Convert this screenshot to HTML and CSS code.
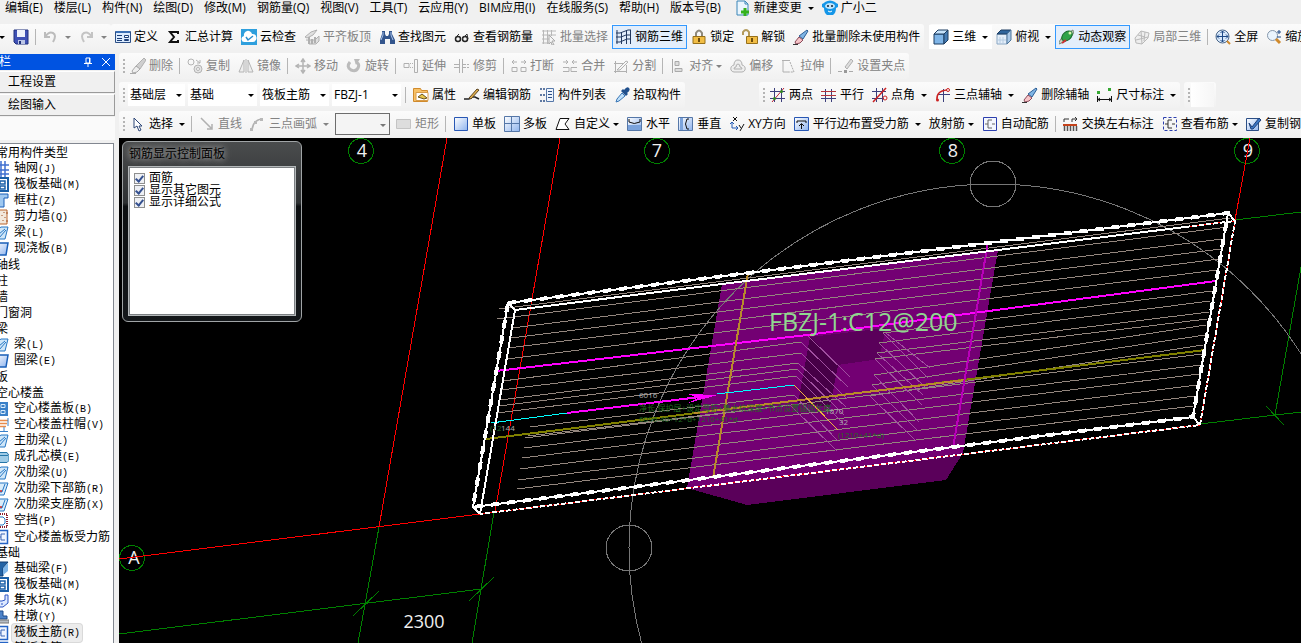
FILE: index.html
```
<!DOCTYPE html>
<html lang="zh-CN">

<head>
    <meta charset="UTF-8">
    <meta name="viewport" content="width=device-width, initial-scale=1.0">
    <title>钢筋三维</title>
    <link rel="stylesheet" href="styles.css">
</head>

<body>
    <!-- icon sprite -->
    <svg class="sprite" aria-hidden="true">
        <defs>
            <linearGradient id="blueFill" x1="0" y1="0" x2="1" y2="1">
                <stop offset="0" stop-color="#fff" />
                <stop offset="1" stop-color="#8fb4ee" />
            </linearGradient>
        </defs>
        <symbol id="newdoc" viewBox="0 0 16 16"><path d="M2 1h8l3 3v11H2z" fill="#eaf5fd" stroke="#3a86b8" /><path d="M10 1v3h3" fill="none" stroke="#3a86b8" /><path d="M8.500 8h3v2.500H14v3h-2.500V16h-3v-2.500H6v-3h2.500z" fill="#35b21c" /></symbol>
        <symbol id="robot" viewBox="0 0 16 16"><path d="M0 4l2-1 1-1q5-3 10 0l1 1 2 1v3l-2 1q0 5-3 7H5q-3-2-3-7L0 7z" fill="#1596e8" /><ellipse cx="8" cy="6" rx="5" ry="3" fill="#bfe4fb" /><circle cx="6" cy="6" r="1" fill="#123" /><circle cx="10" cy="6" r="1" fill="#123" /><path d="M6 11q2 2 4 0" stroke="#fff" fill="none" /></symbol>
        <symbol id="save" viewBox="0 0 16 16"><path d="M1 1h14v14H3l-2-2z" fill="#3f51b5" stroke="#20307c" /><path d="M4 1h8v7H4z" fill="#eef2fb" /><path d="M5 11h7v4H5z" fill="#bcc6e6" /><path d="M6 12h2v3H6z" fill="#20307c" /></symbol>
        <symbol id="undo" viewBox="0 0 16 16"><path d="M2 3v5h5M2 8q4-6 8-4t0 9" fill="none" stroke="#bcbcbc" stroke-width="2" /></symbol>
        <symbol id="redo" viewBox="0 0 16 16"><path d="M13 3v5H8M13 8Q9 2 5 4t0 9" fill="none" stroke="#c4c4c4" stroke-width="2" /></symbol>
        <symbol id="define" viewBox="0 0 16 16"><path d="M.5 2.500h15v11H.5z" fill="#dcecff" stroke="#2c4f86" /><path d="M1 2h14v2H1z" fill="#3b6fb4" /><path d="M2 6.500h5M2 9.500h5M2 11.500h5" stroke="#1d3f78" /><path d="M9.500 6.500h4v2h-4zM9.500 10.500h4v1h-4z" fill="#fff" stroke="#1d3f78" /></symbol>
        <symbol id="sigma" viewBox="0 0 16 16"><path d="M12 5V3H4l4 5-4 5h8v-2" fill="none" stroke="#111" stroke-width="2" /></symbol>
        <symbol id="cloud" viewBox="0 0 16 16"><path d="M0 0h16v16H0z" fill="#2e9fdd" /><path d="M4 13a3 3 0 0 1-1-6 4 4 0 0 1 8-2 4 4 0 0 1 1 8z" fill="#fff" /><path d="M5 8l2 3 5-4" fill="none" stroke="#2e8fcd" stroke-width="1.500" /></symbol>
        <symbol id="flush" viewBox="0 0 16 16"><path d="M1 8l6-5 6-2-4 5-6 3zM2 11h9l4-4v5l-3 3H5v-3" fill="#e0e0e0" stroke="#b0b0b0" /><path d="M5 8v7M8 10v5M11 8v6" stroke="#b0b0b0" stroke-width="2" /></symbol>
        <symbol id="binoculars" viewBox="0 0 16 16"><path d="M3 2h3v3l1 2h2l1-2V2h3v3l3 6v4h-5v-5H6v5H1v-4l2-6z" fill="#33558c" /><path d="M4 3v3l-2 5M12 3v3l2 5" fill="none" stroke="#a7c2ea" /></symbol>
        <symbol id="glasses" viewBox="0 0 16 16"><circle cx="4" cy="10" r="2.500" fill="none" stroke="#222" stroke-width="1.500" /><circle cx="11" cy="10" r="2.500" fill="none" stroke="#222" stroke-width="1.500" /><path d="M1 9l4-4M8 10l5-5 1 5" fill="none" stroke="#333" /></symbol>
        <symbol id="batchsel" viewBox="0 0 16 16"><path d="M1 2h14M1 6h14M1 10h8M1 14h8M2.500 1v14M6.500 1v14M10.500 1v6" stroke="#b8b8b8" /><path d="M8 6l6 6-3 0 2 4-2 0-1-3-2 2z" fill="#f4f4f4" stroke="#aaa" /></symbol>
        <symbol id="rebar3d" viewBox="0 0 16 16"><path d="M1 1v14M5.500 3v12M10.500 1v14M14.500 1v14M0 4h4l8-3h3M0 8h5l5-2h5M0 13h4l7-3h4" fill="none" stroke="#23395f" /></symbol>
        <symbol id="lock" viewBox="0 0 16 16"><path d="M5 8V4q3-5 6 0v4" fill="none" stroke="#8f8a7c" stroke-width="2" /><path d="M2 7.500h12v7H2z" fill="#f1bd45" stroke="#97701a" /><path d="M8 9v4" stroke="#6e4d0c" stroke-width="2" /></symbol>
        <symbol id="unlock" viewBox="0 0 16 16"><path d="M1 6V3q3-4 6 0v5" fill="none" stroke="#b39a5c" stroke-width="2" /><path d="M4.500 7.500h11v7h-11z" fill="#f1bd45" stroke="#97701a" /><path d="M10 9v4" stroke="#6e4d0c" stroke-width="2" /></symbol>
        <symbol id="brush" viewBox="0 0 16 16"><path d="M14 1l1 1-5 8-4-3z" fill="#7fb4e4" stroke="#2d5f96" /><path d="M6 8l4 3-3 3-4 1-1-2z" fill="#f6c4c8" stroke="#8a4a5a" /><path d="M0 15.500h5" stroke="#333" /></symbol>
        <symbol id="cube" viewBox="0 0 16 16"><path d="M1 5h10v10H1z" fill="#7fb5e8" stroke="#1c3c60" /><path d="M1 5l4-4h10l-4 4z" fill="#c6e2fa" stroke="#1c3c60" /><path d="M11 5l4-4v10l-4 4z" fill="#467cb4" stroke="#1c3c60" /></symbol>
        <symbol id="cubetop" viewBox="0 0 16 16"><path d="M1 5h10v10H1z" fill="#e4eef9" stroke="#8aa7c4" /><path d="M1 5l4-4h10l-4 4z" fill="#2f659c" stroke="#1c3c60" /><path d="M11 5l4-4v10l-4 4z" fill="#a8c8e8" stroke="#4d7499" /><path d="M4 8v6M7 8v6M2 11h8" stroke="#b5cce2" /></symbol>
        <symbol id="orbit" viewBox="0 0 16 16"><path d="M0 13q3-6 7-8l7-4q2 3-2 7-5 5-12 7z" fill="#c8d5c4" stroke="#7b8a78" /><ellipse cx="8" cy="7" rx="6" ry="4" transform="rotate(-40 8 7)" fill="#2fa34a" stroke="#176b2b" /><path d="M3 14l4-3" stroke="#c33" stroke-width="2" /><circle cx="11" cy="4" r="1.500" fill="#d9f5b0" /></symbol>
        <symbol id="local3d" viewBox="0 0 16 16"><path d="M1 9l6-7 8 2-1 5-6 6-6-1zM4 6l7 2M7 2l1 13M11 3l-1 9M2 11l12-3" fill="#eee" stroke="#b9b9b9" /></symbol>
        <symbol id="fullscreen" viewBox="0 0 16 16"><circle cx="7.500" cy="7.500" r="6.500" fill="#d9e9fb" stroke="#4a6689" /><path d="M7.500 2v11M2 7.500h11M5.500 4l2-2 2 2M5.500 11l2 2 2-2M4 5.500l-2 2 2 2M11 5.500l2 2-2 2" fill="none" stroke="#1f4a86" /><path d="M12 12l3 3" stroke="#d08a2c" stroke-width="2" /></symbol>
        <symbol id="zoomicon" viewBox="0 0 16 16"><circle cx="6.500" cy="6.500" r="5" fill="#eaf4fd" stroke="#8597ab" /><path d="M10 10l4 4" stroke="#d08a2c" stroke-width="3" /><path d="M11 3h4M13 1v4M11 8h4" stroke="#1f4a86" /></symbol>
        <symbol id="brushgray" viewBox="0 0 16 16"><path d="M14 0l2 2-6 9-4-3z" fill="#cfcfcf" stroke="#b0b0b0" /><path d="M6 8l4 3-3 3-4 1-1-2z" fill="#eee" stroke="#a8a8a8" /><path d="M0 15.500h6" stroke="#aaa" /></symbol>
        <symbol id="copy" viewBox="0 0 16 16"><circle cx="4" cy="4" r="3" fill="none" stroke="#b4b4b4" /><circle cx="11" cy="11" r="4" fill="#e4e4e4" stroke="#b4b4b4" /><circle cx="11" cy="11" r="1.500" fill="#fff" stroke="#b4b4b4" /><path d="M9 2l4 3M13 2v3h-3" fill="none" stroke="#b4b4b4" /></symbol>
        <symbol id="mirror" viewBox="0 0 16 16"><path d="M6 2v12H1zM10 2v12h5z" fill="#eee" stroke="#b4b4b4" /><path d="M8 1v14" stroke="#b4b4b4" /></symbol>
        <symbol id="move" viewBox="0 0 16 16"><path d="M8 2v12M2 8h12M6 4l2-3 2 3M6 12l2 3 2-3M4 6L1 8l3 2M12 6l3 2-3 2" fill="none" stroke="#b4b4b4" stroke-width="1.500" /></symbol>
        <symbol id="rotate" viewBox="0 0 16 16"><path d="M4 4q-4 5 1 8 5 2 7-2t-2-6" fill="none" stroke="#bbb" stroke-width="3" /><path d="M8 1h6l-4 6z" fill="#bbb" /></symbol>
        <symbol id="extend" viewBox="0 0 16 16"><path d="M1 5.500h5v4H1zM11.500 1.500h3v13h-3z" fill="none" stroke="#b0b0b0" /><path d="M7 5.500h4M7 9.500h4" stroke="#b0b0b0" stroke-dasharray="1 1" /></symbol>
        <symbol id="trim" viewBox="0 0 16 16"><path d="M5.500 1v14M8.500 1v14M0 6.500h5M0 9.500h5M9 6.500h3M9 9.500h3M13 6.500h2M13 9.500h2" stroke="#b0b0b0" /></symbol>
        <symbol id="break" viewBox="0 0 16 16"><path d="M1 4h5M10 4h5M3 2L1 4l2 2M13 2l2 2-2 2M1 9.500h5v4H1zM10 9.500h5v4h-5z" fill="none" stroke="#b0b0b0" /></symbol>
        <symbol id="merge" viewBox="0 0 16 16"><path d="M1 4h5M10 4h5M4 2l2 2-2 2M12 2l-2 2 2 2M1 9.500h6v4H1M15 9.500H9v4h6" fill="none" stroke="#b0b0b0" /></symbol>
        <symbol id="split" viewBox="0 0 16 16"><path d="M1 5.500h10M1 13.500h13M2.500 3v12M13.500 7v8M4 12l9-9 2 1-8 8z" fill="none" stroke="#b0b0b0" /></symbol>
        <symbol id="align" viewBox="0 0 16 16"><path d="M2.500 1v14M5 3.500h4v4H5zM5 10.500h7v3H5z" fill="#ddd" stroke="#aaa" /></symbol>
        <symbol id="offset" viewBox="0 0 16 16"><path d="M1 12q-1-4 3-5 0-5 4-5t4 5q4 1 3 5-1 2-3 2H4q-2 0-3-2z" fill="#eee" stroke="#b0b0b0" /><path d="M4 11q0-2 2-2 0-3 2-3t2 3q2 0 2 2z" fill="none" stroke="#b0b0b0" /></symbol>
        <symbol id="stretch" viewBox="0 0 16 16"><path d="M1 2.500h8M2 2v12h5" fill="none" stroke="#b0b0b0" /><path d="M9 4l4 10H7" fill="none" stroke="#aaa" stroke-dasharray="2 1" /></symbol>
        <symbol id="grippoint" viewBox="0 0 16 16"><path d="M7 9l6-8 2 2-6 8z" fill="#ddd" stroke="#b0b0b0" /><path d="M0 13.500h4M11 13.500h4" stroke="#aaa" /><path d="M6 12h3v3H6z" fill="#999" /></symbol>
        <symbol id="props" viewBox="0 0 16 16"><path d="M.5 1.500h7l1 2h6v11H.5z" fill="#f7c167" stroke="#d08a2c" /><path d="M3 5.500h12v8H3z" fill="#fff" stroke="#d89c4a" /><path d="M5 10l4-3 5 4-3 1z" fill="#e8c64b" stroke="#6b5320" /></symbol>
        <symbol id="editbar" viewBox="0 0 16 16"><path d="M0 12h5l2-2h4l4 2" fill="none" stroke="#222" stroke-width="1.500" /><path d="M5 11l8-9 2 1-8 9z" fill="#e2b04b" stroke="#5a4320" /></symbol>
        <symbol id="list" viewBox="0 0 16 16"><path d="M1 2h2M1 8h2M1 14h2M4 2h2M4 8h2M4 14h2" stroke="#2c4f86" stroke-width="1.500" /><path d="M7.500 1.500h7v13h-7z" fill="#eef4fc" stroke="#5577a8" /><path d="M9 4.500h4M9 7.500h4M9 10.500h4" stroke="#2c4f86" /></symbol>
        <symbol id="dropper" viewBox="0 0 16 16"><path d="M10 3q3-4 5-2t-2 5l1 1-2 2-5-5 2-2z" fill="#1f4f8c" /><path d="M8 6l3 3-6 5-3 1 1-3z" fill="#bfe0fa" stroke="#3a76b5" /></symbol>
        <symbol id="twopoint" viewBox="0 0 16 16"><path d="M4.500 1v14M11.500 1v14M0 4.500h15M0 11.500h15" stroke="#3c3f7c" /><path d="M2 15L14 1" stroke="#b23" /><circle cx="4.500" cy="11.500" r="1.500" fill="#2d8a22" /><circle cx="11.500" cy="4.500" r="1.500" fill="#2d8a22" /></symbol>
        <symbol id="parallel" viewBox="0 0 16 16"><path d="M4.500 2v13M10.500 2v13M0 11.500h15" stroke="#3c3f7c" /><path d="M0 4.500h15M0 8.500h15" stroke="#b5343c" /></symbol>
        <symbol id="angle" viewBox="0 0 16 16"><path d="M4.500 1v14M10.500 1v14M0 4.500h14M0 11.500h12" stroke="#3c3f7c" /><path d="M1 15L14 1" stroke="#c22" stroke-width="1.500" /><circle cx="13" cy="11" r="2" fill="none" stroke="#c22" /></symbol>
        <symbol id="threeaxis" viewBox="0 0 16 16"><path d="M8.500 2v13M3 7.500h12" stroke="#3c3f7c" /><path d="M2 13q-1-9 10-10" fill="none" stroke="#c22" stroke-width="1.500" /><circle cx="2.500" cy="13" r="1.500" fill="#c22" /><circle cx="13" cy="3" r="1.500" fill="none" stroke="#c22" /></symbol>
        <symbol id="dimension" viewBox="0 0 16 16"><path d="M.5 9v6M14.500 9v6M1 12.500h13M3 11l-2 1.500 2 1.500M12 11l2 1.500-2 1.500" fill="none" stroke="#111" /><path d="M0 4h3v3H0zM11 1h3v3h-3z" fill="#35a832" /></symbol>
        <symbol id="pointer" viewBox="0 0 16 16"><path d="M4 2v10l3-2 2 5 2-1-2-4h3z" fill="#fff" stroke="#2d4677" /></symbol>
        <symbol id="line" viewBox="0 0 16 16"><path d="M2 2l11 11M13 8v5H8" fill="none" stroke="#b0b0b0" stroke-width="1.500" /></symbol>
        <symbol id="arc" viewBox="0 0 16 16"><path d="M2 14Q3 4 12 3" fill="none" stroke="#b0b0b0" stroke-width="1.500" /><path d="M0 12h3v3H0zM4 5h3v3H4zM10 2h3v3h-3z" fill="#b8b8b8" /></symbol>
        <symbol id="rect" viewBox="0 0 16 16"><path d="M.5 3.500h14v9H.5z" fill="#ddd" stroke="#c4c4c4" /></symbol>
        <symbol id="single" viewBox="0 0 16 16"><path d="M1.500 1.500h13v13h-13z" fill="url(#blueFill)" stroke="#2857b4" /></symbol>
        <symbol id="multi" viewBox="0 0 16 16"><path d="M.5.5h15v15H.5z" fill="url(#blueFill)" stroke="#5577a8" /><path d="M7.500 1v14M1 7.500h14" stroke="#5577a8" /></symbol>
        <symbol id="custom" viewBox="0 0 16 16"><path d="M5 2.500h9L10 8l4 5.500H1z" fill="#fff" stroke="#111" /></symbol>
        <symbol id="horizontal" viewBox="0 0 16 16"><path d="M.5 1.500h14v13H.5z" fill="url(#blueFill)" stroke="#5577a8" /><path d="M1 9h13v5H1z" fill="#7ba3dc" /><path d="M2 3v3q5 3 11 0V3" fill="none" stroke="#111" /></symbol>
        <symbol id="vertical" viewBox="0 0 16 16"><path d="M.5 1.500h14v13H.5z" fill="url(#blueFill)" stroke="#5577a8" /><path d="M2 2h3v12H2z" fill="#7ba3dc" /><path d="M11 3H9q-3 5 0 10h2" fill="none" stroke="#111" /></symbol>
        <symbol id="xy" viewBox="0 0 16 16"><path d="M4 1l4 4M8 1L4 5M10 9l2 3M15 8l-4 7" stroke="#111" /><path d="M3 6v6h6M1 8l2-2 2 2M7 10l2 2-2 2" fill="none" stroke="#245bb5" /></symbol>
        <symbol id="edge" viewBox="0 0 16 16"><path d="M.5 1.500h14v13H.5z" fill="url(#blueFill)" stroke="#2857b4" /><path d="M3 7V5h9v2M7.500 13V8M5 10l2.500-2.500L10 10" fill="none" stroke="#111" /></symbol>
        <symbol id="auto" viewBox="0 0 16 16"><path d="M1.500 1.500h13v13h-13z" fill="#f4f7ff" stroke="#2c3fae" /><path d="M10 4H6v8h4M3 8h3M10 8h3" fill="none" stroke="#666" /></symbol>
        <symbol id="swap" viewBox="0 0 16 16"><path d="M1 6V3h5M9 6V3h5M12 1l2 2-2 2" fill="none" stroke="#333" /><path d="M0 8h14v2H0z" fill="#c4421a" /><path d="M1.500 10v5M4.500 10v5M7.500 10v5M10.500 10v5M13.500 10v5" stroke="#555" stroke-width="1.500" /></symbol>
        <symbol id="viewbar" viewBox="0 0 16 16"><path d="M1.500 1.500h13v13h-13z" fill="none" stroke="#2c3fae" stroke-dasharray="3 2" /><path d="M10 4H6v8h4M3 8h3M10 8h3" fill="none" stroke="#333" /></symbol>
        <symbol id="copybar" viewBox="0 0 16 16"><path d="M.5 2.500h12v12H.5z" fill="url(#blueFill)" stroke="#2c4f86" /><path d="M3 7l3 4 7-9 2 2-8 9H5z" fill="#3a76c5" stroke="#1d3f78" /></symbol>
        <!-- component tree icons -->
        <symbol id="axis" viewBox="0 0 16 16"><path d="M4 0v16M8 0v16M12 0v16M0 4h16M0 9h16M0 13h16" stroke="#3f6fd0" stroke-width="1.500" /></symbol>
        <symbol id="raft" viewBox="0 0 16 16"><path d="M1 1h14v13H1z" fill="#fff" stroke="#1a5fa8" stroke-width="2" /><path d="M7 4h5v3H7zM7 9h5v3H7z" fill="none" stroke="#1a5fa8" stroke-width="1.500" /></symbol>
        <symbol id="column" viewBox="0 0 16 16"><path d="M1 3l3-2h11v4h-4v9H5V5H1z" fill="#9fc8f0" stroke="#1a5fb8" /></symbol>
        <symbol id="wall" viewBox="0 0 16 16"><path d="M1 1h13v14H1z" fill="#f2e8dc" stroke="#b8642c" /><path d="M11 3v1M9 6v1M12 8v1M10 11v1M13 12h2M13 4h2" stroke="#a05020" /></symbol>
        <symbol id="beam" viewBox="0 0 16 16"><path d="M4 5l4-3h7l-3 12H5z" fill="#cfe6f8" stroke="#2576c4" /><path d="M6 9l6-5M6 13l7-8" stroke="#2576c4" /></symbol>
        <symbol id="slab" viewBox="0 0 16 16"><path d="M1 2h14l-2 12H1z" fill="url(#blueFill)" stroke="#1a5fb8" stroke-width="1.500" /></symbol>
        <symbol id="hollow" viewBox="0 0 16 16"><path d="M0 1h15v14H0z" fill="#3a80c8" /><path d="M8 3.500h4v3H8zM8 9.500h4v3H8zM2 3.500h4v3H2zM2 9.500h4v3H2z" fill="#3a80c8" stroke="#d5eafb" /></symbol>
        <symbol id="cap" viewBox="0 0 16 16"><path d="M1 3.500h14M1 6.500h13M1 9.500h12" stroke="#e88b4c" stroke-width="1.500" /><path d="M11 10v4M7 14.500h8M15 1v8" stroke="#3a80c8" /></symbol>
        <symbol id="core" viewBox="0 0 16 16"><path d="M0 3.500h14l2 3v5l-2 2H0z" fill="#9ecbe6" stroke="#2576a8" /><path d="M0 6.500h15" fill="none" stroke="#2576a8" /></symbol>
        <symbol id="ribbar" viewBox="0 0 16 16"><path d="M1 2h14l-4 12H1z" fill="#d9ecfa" stroke="#2576c4" /><path d="M12 3L9 11H3" fill="none" stroke="#2576c4" /><circle cx="8" cy="10" r="1" fill="#c22" /></symbol>
        <symbol id="gap" viewBox="0 0 16 16"><path d="M1 1h13v13H1z" fill="none" stroke="#8c2030" stroke-dasharray="1 1" stroke-width="2" /><path d="M5 4h5l2 2v4l-2 2H5z" fill="#fff" stroke="#2576c4" /></symbol>
        <symbol id="found" viewBox="0 0 16 16"><path d="M1 6l6-5h8l-5 6v8H6V9H1z" fill="#2463a5" stroke="#123f72" /><path d="M10 7l5-5v8l-5 4z" fill="#7fb5e8" /></symbol>
        <symbol id="sump" viewBox="0 0 16 16"><path d="M1 4h5v4h3l3-1V2h3v8l-5 4H1z" fill="#dce8ff" stroke="#2c55c4" /><path d="M4 10h2M8 11h2M3 12h2" stroke="#2c55c4" /></symbol>
        <symbol id="pier" viewBox="0 0 16 16"><path d="M6 2h4v5h4v3H1V7h5z" fill="#4d82c8" stroke="#1d4a8c" /><path d="M0 11h16v3H0z" fill="#b5bcc4" stroke="#777" /></symbol>
        <symbol id="mainbar" viewBox="0 0 16 16"><path d="M0 1.500h14.500v13H0" fill="#eef4ff" stroke="#2463c5" stroke-width="1.500" /><path d="M12 5H8v6h4M2 8h6" fill="none" stroke="#3a64b4" /></symbol>
    </svg>

    <nav class="menubar">
        <button>编辑(E)</button>
        <button>楼层(L)</button>
        <button>构件(N)</button>
        <button>绘图(D)</button>
        <button>修改(M)</button>
        <button>钢筋量(Q)</button>
        <button>视图(V)</button>
        <button>工具(T)</button>
        <button>云应用(Y)</button>
        <button>BIM应用(I)</button>
        <button>在线服务(S)</button>
        <button>帮助(H)</button>
        <button>版本号(B)</button>
        <div class="plugins">
            <button class="tool split"><svg class="icon"><use href="#newdoc" /></svg>新建变更</button>
            <button class="tool"><svg class="icon"><use href="#robot" /></svg>广小二</button>
        </div>
    </nav>

    <div class="toolbar">
        <div class="group history">
            <button class="tool drop" aria-label="打开"></button>
            <button class="tool" aria-label="保存"><svg class="icon"><use href="#save" /></svg></button>
            <span class="sep"></span>
            <button class="tool split" aria-label="撤销" disabled><svg class="icon"><use href="#undo" /></svg></button>
            <button class="tool split" aria-label="恢复" disabled><svg class="icon"><use href="#redo" /></svg></button>
        </div>
        <div class="group">
            <button class="tool"><svg class="icon"><use href="#define" /></svg>定义</button>
            <button class="tool"><svg class="icon"><use href="#sigma" /></svg>汇总计算</button>
            <button class="tool"><svg class="icon"><use href="#cloud" /></svg>云检查</button>
            <button class="tool" disabled><svg class="icon"><use href="#flush" /></svg>平齐板顶</button>
            <button class="tool"><svg class="icon"><use href="#binoculars" /></svg>查找图元</button>
            <button class="tool"><svg class="icon"><use href="#glasses" /></svg>查看钢筋量</button>
            <button class="tool" disabled><svg class="icon"><use href="#batchsel" /></svg>批量选择</button>
            <button class="tool active"><svg class="icon"><use href="#rebar3d" /></svg>钢筋三维</button>
            <button class="tool"><svg class="icon"><use href="#lock" /></svg>锁定</button>
            <button class="tool"><svg class="icon"><use href="#unlock" /></svg>解锁</button>
            <button class="tool"><svg class="icon"><use href="#brush" /></svg>批量删除未使用构件</button>
        </div>
        <div class="group view-tools">
            <button class="tool split picked"><svg class="icon"><use href="#cube" /></svg>三维</button>
            <button class="tool split"><svg class="icon"><use href="#cubetop" /></svg>俯视</button>
            <button class="tool active"><svg class="icon"><use href="#orbit" /></svg>动态观察</button>
            <button class="tool" disabled><svg class="icon"><use href="#local3d" /></svg>局部三维</button>
            <span class="sep"></span>
            <button class="tool"><svg class="icon"><use href="#fullscreen" /></svg>全屏</button>
            <button class="tool"><svg class="icon"><use href="#zoomicon" /></svg>缩放</button>
        </div>
    </div>

    <div class="workspace">
        <aside class="sidebar">
            <div class="sidebar-title">
                <span class="sidebar-name">模块导航栏</span>
                <button aria-label="固定"><svg viewBox="0 0 10 10"><path d="M3 1h4v5H3zM1 6.500h8M5 7v3M6.500 1v5" fill="none" stroke="#fff" /></svg></button>
                <button aria-label="关闭"><svg viewBox="0 0 10 10"><path d="M1 1l8 8M9 1L1 9" stroke="#fff" /></svg></button>
            </div>
            <button class="nav-tab">工程设置</button>
            <button class="nav-tab">绘图输入</button>
            <div class="nav-gap"></div>
            <ul class="tree">
                <li class="cat">常用构件类型</li>
                <li><svg class="icon"><use href="#axis" /></svg><span>轴网<i>(J)</i></span></li>
                <li><svg class="icon"><use href="#raft" /></svg><span>筏板基础<i>(M)</i></span></li>
                <li><svg class="icon"><use href="#column" /></svg><span>框柱<i>(Z)</i></span></li>
                <li><svg class="icon"><use href="#wall" /></svg><span>剪力墙<i>(Q)</i></span></li>
                <li><svg class="icon"><use href="#beam" /></svg><span>梁<i>(L)</i></span></li>
                <li><svg class="icon"><use href="#slab" /></svg><span>现浇板<i>(B)</i></span></li>
                <li class="cat">轴线</li>
                <li class="cat">柱</li>
                <li class="cat">墙</li>
                <li class="cat">门窗洞</li>
                <li class="cat">梁</li>
                <li><svg class="icon"><use href="#beam" /></svg><span>梁<i>(L)</i></span></li>
                <li><svg class="icon"><use href="#slab" /></svg><span>圈梁<i>(E)</i></span></li>
                <li class="cat">板</li>
                <li class="cat">空心楼盖</li>
                <li><svg class="icon"><use href="#hollow" /></svg><span>空心楼盖板<i>(B)</i></span></li>
                <li><svg class="icon"><use href="#cap" /></svg><span>空心楼盖柱帽<i>(V)</i></span></li>
                <li><svg class="icon"><use href="#beam" /></svg><span>主肋梁<i>(L)</i></span></li>
                <li><svg class="icon"><use href="#core" /></svg><span>成孔芯模<i>(E)</i></span></li>
                <li><svg class="icon"><use href="#beam" /></svg><span>次肋梁<i>(U)</i></span></li>
                <li><svg class="icon"><use href="#ribbar" /></svg><span>次肋梁下部筋<i>(R)</i></span></li>
                <li><svg class="icon"><use href="#ribbar" /></svg><span>次肋梁支座筋<i>(X)</i></span></li>
                <li><svg class="icon"><use href="#gap" /></svg><span>空挡<i>(P)</i></span></li>
                <li><svg class="icon"><use href="#mainbar" /></svg><span>空心楼盖板受力筋</span></li>
                <li class="cat">基础</li>
                <li><svg class="icon"><use href="#found" /></svg><span>基础梁<i>(F)</i></span></li>
                <li><svg class="icon"><use href="#raft" /></svg><span>筏板基础<i>(M)</i></span></li>
                <li><svg class="icon"><use href="#sump" /></svg><span>集水坑<i>(K)</i></span></li>
                <li><svg class="icon"><use href="#pier" /></svg><span>柱墩<i>(Y)</i></span></li>
                <li class="selected"><svg class="icon"><use href="#mainbar" /></svg><span>筏板主筋<i>(R)</i></span></li>
                <li><svg class="icon"><use href="#mainbar" /></svg><span>筏板负筋<i>(X)</i></span></li>
            </ul>
        </aside>

        <main class="main">
            <div class="toolbar">
                <div class="group">
                    <span class="grip"></span>
                    <button class="tool" disabled><svg class="icon"><use href="#brushgray" /></svg>删除</button>
                    <span class="sep"></span>
                    <button class="tool" disabled><svg class="icon"><use href="#copy" /></svg>复制</button>
                    <button class="tool" disabled><svg class="icon"><use href="#mirror" /></svg>镜像</button>
                    <span class="sep"></span>
                    <button class="tool" disabled><svg class="icon"><use href="#move" /></svg>移动</button>
                    <button class="tool" disabled><svg class="icon"><use href="#rotate" /></svg>旋转</button>
                    <span class="sep"></span>
                    <button class="tool" disabled><svg class="icon"><use href="#extend" /></svg>延伸</button>
                    <button class="tool" disabled><svg class="icon"><use href="#trim" /></svg>修剪</button>
                    <span class="sep"></span>
                    <button class="tool" disabled><svg class="icon"><use href="#break" /></svg>打断</button>
                    <button class="tool" disabled><svg class="icon"><use href="#merge" /></svg>合并</button>
                    <button class="tool" disabled><svg class="icon"><use href="#split" /></svg>分割</button>
                    <span class="sep"></span>
                    <button class="tool drop" disabled><svg class="icon"><use href="#align" /></svg>对齐</button>
                    <button class="tool" disabled><svg class="icon"><use href="#offset" /></svg>偏移</button>
                    <button class="tool" disabled><svg class="icon"><use href="#stretch" /></svg>拉伸</button>
                    <span class="sep"></span>
                    <button class="tool" disabled><svg class="icon"><use href="#grippoint" /></svg>设置夹点</button>
                </div>
            </div>

            <div class="toolbar">
                <div class="group">
                    <span class="grip"></span>
                    <div class="combos">
                        <label class="combo short"><select aria-label="楼层"><option>基础层</option></select></label>
                        <label class="combo"><select aria-label="构件类别"><option>基础</option></select></label>
                        <label class="combo"><select aria-label="构件类型"><option>筏板主筋</option></select></label>
                        <label class="combo"><select aria-label="构件名称"><option>FBZJ-1</option></select></label>
                    </div>
                    <span class="sep"></span>
                    <button class="tool"><svg class="icon"><use href="#props" /></svg>属性</button>
                    <button class="tool"><svg class="icon"><use href="#editbar" /></svg>编辑钢筋</button>
                    <button class="tool"><svg class="icon"><use href="#list" /></svg>构件列表</button>
                    <button class="tool"><svg class="icon"><use href="#dropper" /></svg>拾取构件</button>
                </div>
                <div class="group axis-tools">
                    <span class="grip"></span>
                    <button class="tool"><svg class="icon"><use href="#twopoint" /></svg>两点</button>
                    <button class="tool"><svg class="icon"><use href="#parallel" /></svg>平行</button>
                    <button class="tool split"><svg class="icon"><use href="#angle" /></svg>点角</button>
                    <button class="tool split"><svg class="icon"><use href="#threeaxis" /></svg>三点辅轴</button>
                    <button class="tool"><svg class="icon"><use href="#brush" /></svg>删除辅轴</button>
                    <button class="tool split"><svg class="icon"><use href="#dimension" /></svg>尺寸标注</button>
                </div>
                <div class="group blank-tools">
                    <span class="grip"></span>
                    <span class="blank"></span>
                </div>
            </div>

            <div class="toolbar">
                <div class="group">
                    <span class="grip"></span>
                    <button class="tool split"><svg class="icon"><use href="#pointer" /></svg>选择</button>
                    <span class="sep"></span>
                    <button class="tool" disabled><svg class="icon"><use href="#line" /></svg>直线</button>
                    <button class="tool split" disabled><svg class="icon"><use href="#arc" /></svg>三点画弧</button>
                    <label class="combo boxed"><select aria-label="弧参数" disabled><option></option></select></label>
                    <button class="tool" disabled><svg class="icon"><use href="#rect" /></svg>矩形</button>
                    <span class="sep"></span>
                    <button class="tool"><svg class="icon"><use href="#single" /></svg>单板</button>
                    <button class="tool"><svg class="icon"><use href="#multi" /></svg>多板</button>
                    <button class="tool drop"><svg class="icon"><use href="#custom" /></svg>自定义</button>
                    <button class="tool"><svg class="icon"><use href="#horizontal" /></svg>水平</button>
                    <button class="tool"><svg class="icon"><use href="#vertical" /></svg>垂直</button>
                    <button class="tool"><svg class="icon"><use href="#xy" /></svg>XY方向</button>
                    <button class="tool split"><svg class="icon"><use href="#edge" /></svg>平行边布置受力筋</button>
                    <button class="tool drop">放射筋</button>
                    <button class="tool"><svg class="icon"><use href="#auto" /></svg>自动配筋</button>
                    <span class="sep"></span>
                    <button class="tool"><svg class="icon"><use href="#swap" /></svg>交换左右标注</button>
                    <button class="tool drop"><svg class="icon"><use href="#viewbar" /></svg>查看布筋</button>
                    <button class="tool"><svg class="icon"><use href="#copybar" /></svg>复制钢筋</button>
                </div>
            </div>

            <div class="viewport">
                <svg class="scene" viewBox="119 138 1182 505" preserveAspectRatio="xMinYMin slice">
                    <!-- axis grid -->
                    <g class="green">
                        <path d="M379 527L358 643M494 512L472 643M119 634L481 589M353 616L379 591M469 601L494 577" />
                        <path d="M1235 220L1301 212M1200 424L1301 412M1301 267L1275 415M1266 406L1284 425" />
                        <circle cx="361" cy="151" r="12.500" />
                        <circle cx="657" cy="151" r="12.500" />
                        <circle cx="952" cy="151" r="12.500" />
                        <circle cx="1247" cy="151" r="12.500" />
                        <circle cx="132" cy="558" r="12.500" />
                    </g>
                    <g class="axis-label">
                        <text x="362" y="157">4</text>
                        <text x="657" y="157">7</text>
                        <text x="953" y="157">8</text>
                        <text x="1248" y="157">9</text>
                        <text x="134" y="564">A</text>
                        <text x="424" y="628">2300</text>
                    </g>
                    <g class="red">
                        <path d="M447 138L379 527M560 138L495 512M119 559L480 514M1250 138L1235 220" />
                    </g>

                    <!-- sump -->
                    <path class="pit" d="M722 284L998 250 963 453 687 488z" />
                    <path class="pit-side" d="M687 488L963 453 946 480 747 505z" />
                    <path class="pit-deep" d="M810 337L838 365 830 407 798 403z" />
                    <path class="pit-side" d="M810 337L886 328 879 359 838 365z" />

                    <!-- orbit handle -->
                    <g class="orbit">
                        <circle cx="993" cy="548" r="364" />
                        <circle cx="993" cy="184" r="23" />
                        <circle cx="629" cy="548" r="23" />
                    </g>

                    <!-- rebars -->
                    <g class="bar">
                        <path d="M499 309L1230 218M497 319L1228 227M512 328L1222 239M511 338L1221 249M508 348L1219 259M507 359L1217 270" />
                        <path d="M503 381L801 342M501 390L801 353M500 400L798 363M499 406L797 369M497 413L796 376M530 427L794 395M528 436L790 405" />
                        <path d="M1212 291L883 333M1210 301L879 343M1209 312L877 353M1207 319L875 359M1206 325L874 375M1205 335L872 385M1203 345L870 396" />
                        <path d="M525 438L1202 354M524 448L1201 365M522 458L1199 374M520 469L1197 385M518 480L1195 396M517 489L1193 406" />
                    </g>
                    <g class="diag">
                        <path d="M807 335L850 377M801 342L848 387M801 353L847 399M798 363L846 407M797 369L844 415M796 376L843 423M794 395L838 441M790 405L837 451" />
                        <path d="M886 333L930 368M883 333L928 378M879 343L926 388M877 353L923 395M875 359L922 405M874 375L919 422M872 385L918 431M870 396L916 441" />
                    </g>
                    <path class="bar-main" d="M496 371L807 335 1216 281M496 371v4" />
                    <path class="olive" d="M486 439L1205 350" />
                    <path class="gold" d="M748 273L713 478M694 413L965 380" />
                    <path class="violet" d="M988 242L953 448" />
                    <path class="cyan" d="M491 423L567 413M717 394L794 385" />
                    <path class="bar-main" d="M567 413L700 397" />
                    <path class="arrow" d="M688 394L718 395 688 403 698 398z" />
                    <path class="orange" d="M794 385L838 430" />

                    <!-- slab outline -->
                    <path class="slab" d="M515 310L722 284 1185 227M515 310L480 514M508 303l7 7M1228 213l7 8M1193 417l7 8M473 507l7 7" />
                    <path class="red" d="M1185 227L1235 221 1200 425 480 514" />
                    <path class="slab back" d="M1185 227L1235 221 1200 425 480 514" />
                    <path class="slab" d="M508 303L1228 213 1193 417 473 507z" />
                    <path class="slab thick" d="M508 303L1228 213 1193 417 473 507z" />

                    <!-- rebar notes -->
                    <text class="title-note" x="769" y="331">FBZJ-1:C12@200</text>
                    <g class="note">
                        <text x="639" y="398">6016</text>
                        <text x="501" y="431">144</text>
                        <text x="825" y="414">1670</text>
                        <text x="839" y="425">32</text>
                    </g>
                    <g class="note dim">
                        <text x="490" y="431">(12</text>
                        <text x="639" y="411">净长-保护层+设定弯折+集水坑深度+节点设置锚固长度</text>
                        <text x="639" y="422">6096-40+12*d+1210+41*d</text>
                        <text x="838" y="438">(1210+41*d)</text>
                    </g>
                </svg>

                <section class="panel">
                    <h2>钢筋显示控制面板</h2>
                    <div class="panel-body">
                        <label><input type="checkbox" checked>面筋</label>
                        <label><input type="checkbox" checked>显示其它图元</label>
                        <label><input type="checkbox" checked>显示详细公式</label>
                    </div>
                </section>
            </div>
        </main>
    </div>
</body>

</html>
```
FILE: styles.css
```
* {
    box-sizing: border-box;
}

body {
    margin: 0;
    height: 100vh;
    display: flex;
    flex-direction: column;
    overflow: hidden;
    background: #f0f0f0;
    color: #000;
    font-family: "Open Sans", "Noto Sans CJK SC", sans-serif;
    font-size: 12px;
    line-height: 16px;
}

button,
select {
    font: inherit;
    color: inherit;
    white-space: nowrap;
}

button {
    margin: 0;
    padding: 0;
    border: none;
    background: none;
}

.sprite {
    position: absolute;
    width: 0;
    height: 0;
}

.icon {
    width: 16px;
    height: 16px;
    flex: none;
}

/* menu bar */
.menubar {
    display: flex;
    flex: none;
    gap: 1px;
    height: 24px;
    padding-bottom: 8px;
}

.menubar button {
    flex: none;
    height: 16px;
    padding: 0 5px;
}

.plugins {
    display: flex;
    margin-left: 4px;
}

.menubar .tool {
    padding: 0 3px;
}

/* toolbars */
.toolbar {
    display: flex;
    flex: none;
    height: 26px;
    margin-bottom: 3px;
    overflow: hidden;
}

.group {
    display: flex;
    flex: none;
    align-items: center;
    border-radius: 3px;
    background: linear-gradient(#fbfbfb, #f1f1f1);
}

.main .group {
    padding-left: 3px;
}

.history {
    margin-left: -5px;
}

.view-tools {
    margin-left: 5px;
}

.tool {
    display: flex;
    flex: none;
    align-items: center;
    gap: 3px;
    height: 24px;
    padding: 0 3px;
    border: 1px solid transparent;
}

.tool:disabled {
    color: #838383;
}

.tool.active {
    border-color: #3399ff;
    background: #e3eefb;
}

.tool.picked {
    background: #fff;
}

.split::after,
.drop::after,
.combo::after {
    content: "";
    border: 3px solid transparent;
    border-top-color: currentColor;
    border-bottom: none;
}

.split::after {
    margin-left: 3px;
}

.sep {
    width: 1px;
    height: 16px;
    margin: 0 3px 0 2px;
    background: #b5b5b5;
}

.grip {
    width: 2px;
    height: 14px;
    margin: 0 1px;
    background: repeating-linear-gradient(#b4b4b4 0 2px, transparent 2px 4px);
}

.combos {
    display: flex;
    gap: 3px;
    margin: 0 2px;
}

.combo {
    position: relative;
    width: 69px;
    height: 22px;
    background: #fff;
}

.combo.short {
    width: 57px;
}

.combo.boxed {
    width: 55px;
    margin: 0 2px;
    border: 1px solid #6d6d6d;
    background: #f4f4f4;
    color: #777;
}

.combo select {
    appearance: none;
    width: 100%;
    height: 100%;
    margin: 0;
    padding: 0 2px;
    border: none;
    background: none;
}

.combo::after {
    position: absolute;
    right: 3px;
    top: 10px;
}

.axis-tools {
    margin-left: 74px;
}

.blank-tools {
    margin-left: 4px;
    padding-right: 2px;
}

.blank {
    width: 23px;
    height: 24px;
    background: linear-gradient(90deg, #fff, #f6f6f6);
}

/* left navigation */
.workspace {
    display: flex;
    flex: 1;
    min-height: 0;
}

.sidebar {
    display: flex;
    flex-direction: column;
    flex: none;
    width: 115px;
    margin: 1px 4px 0 0;
    overflow: hidden;
}

.sidebar-title {
    display: flex;
    flex: none;
    justify-content: flex-end;
    align-items: center;
    gap: 8px;
    height: 16px;
    margin-bottom: 1px;
    padding-right: 4px;
    background: #0053e1;
    color: #fff;
}

.sidebar-name {
    flex: none;
    margin-right: 64px;
}

.sidebar-title button {
    flex: none;
    width: 10px;
    height: 10px;
}

.sidebar-title svg {
    display: block;
}

.nav-tab {
    flex: none;
    height: 22px;
    margin-bottom: 1px;
    padding-left: 8px;
    border: 1px solid #9a9a9a;
    border-left: none;
    border-top-color: #fff;
    background: #f0f0f0;
    text-align: left;
}

.nav-gap {
    flex: none;
    height: 23px;
    margin-bottom: 3px;
    background: #fafafa;
}

.tree {
    flex: 1;
    margin: 0 1px 0 -7px;
    padding: 1px 0 0;
    overflow: hidden;
    list-style: none;
    background: #fff;
    border-top: 1px solid #828790;
    border-right: 1px solid #828790;
}

.tree li {
    display: flex;
    align-items: center;
    gap: 3px;
    height: 16px;
    white-space: nowrap;
}

.tree .cat {
    padding-left: 3px;
}

.tree li span {
    padding: 0 2px;
}

.tree .selected span {
    border-radius: 3px;
    background: #ececec;
    box-shadow: 0 0 0 1px #d9d9d9;
}

.tree i {
    font-family: "Liberation Mono", monospace;
    font-size: 10px;
    font-style: normal;
}

.main {
    display: flex;
    flex-direction: column;
    flex: 1;
    min-width: 0;
}

/* 3d view */
.viewport {
    position: relative;
    flex: 1;
    min-height: 0;
    margin-top: -2px;
    background: #000;
    overflow: hidden;
}

.scene {
    display: block;
    width: 100%;
    height: 100%;
    fill: none;
    shape-rendering: crispEdges;
}

.red {
    stroke: #f00;
}

.green {
    stroke: #008000;
}

.orbit {
    stroke: #777;
}

.pit {
    fill: #730073;
}

.pit-side {
    fill: #5a005a;
}

.pit-deep {
    fill: #470047;
}

.bar {
    stroke: #94867e;
}

.bar-main {
    stroke: #f0f;
    stroke-width: 2;
}

.arrow {
    fill: #f0f;
}

.diag {
    stroke: #a050a0;
}

.olive {
    stroke: #808000;
    stroke-width: 2;
}

.gold {
    stroke: #b98a2c;
    stroke-width: 2;
}

.violet {
    stroke: #b900b9;
    stroke-width: 2;
}

.cyan {
    stroke: #0ff;
}

.orange {
    stroke: #f0b040;
}

.slab {
    stroke: #fff;
    stroke-width: 2;
}

.slab.back {
    stroke-dasharray: 5 2;
}

.slab.thick {
    stroke-width: 4;
    stroke-dasharray: 8 8;
}

.axis-label {
    fill: #f0f0f0;
    font-size: 18px;
    text-anchor: middle;
}

.title-note {
    fill: #90d890;
    font-size: 25px;
}

.note {
    fill: #b0b0b0;
    font-size: 8px;
}

.note.dim {
    fill: #1f6a1f;
}

/* floating panel */
.panel {
    position: absolute;
    left: 3px;
    top: 3px;
    width: 180px;
    height: 181px;
    display: flex;
    flex-direction: column;
    padding: 0 6px 6px;
    border: 1px solid #a0a4a6;
    border-radius: 6px;
    background: linear-gradient(#4a4c4d, #2e3133 34%, #0c0f11 36%, #14171a);
}

.panel h2 {
    margin: 0;
    padding: 4px 0 5px;
    font-size: 12px;
    font-weight: normal;
    line-height: 16px;
    text-shadow: 0 0 6px #aaa, 0 0 8px #999;
}

.panel-body {
    flex: 1;
    padding: 4px;
    border: 1px solid #7c8083;
    outline: 1px solid #b4b8ba;
    background: #fff;
}

.panel label {
    display: flex;
    align-items: center;
    gap: 4px;
    height: 12px;
    line-height: 12px;
}

.panel input {
    appearance: none;
    display: grid;
    place-items: center;
    flex: none;
    width: 11px;
    height: 11px;
    margin: 0;
    border: 1px solid #8e8f8f;
    background: #eef0f4;
}

.panel input:checked::after {
    content: "";
    width: 3px;
    height: 6px;
    border: solid #34508f;
    border-width: 0 2px 2px 0;
    transform: rotate(40deg);
}
```
